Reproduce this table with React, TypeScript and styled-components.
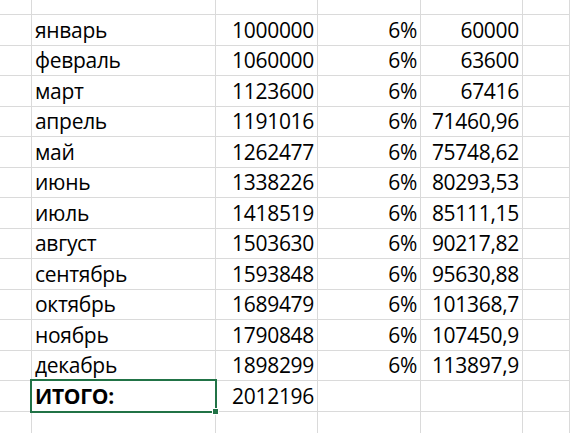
import React from "react";
import styled, { createGlobalStyle } from "styled-components";

const Global = createGlobalStyle`
  html, body { margin: 0; padding: 0; background: #ffffff; }
  body { width: 570px; height: 433px; overflow: hidden; }
`;

const Sheet = styled.div`
  display: grid;
  grid-template-columns: 32px 184px 102px 103px 102px 1fr;
  grid-auto-rows: 30.5px;
  grid-template-rows: 15px;
  width: 570px;
  height: 433px;
  overflow: hidden;
  font-family: "Open Sans", "Liberation Sans", sans-serif;
  font-size: 21px;
  color: #000;
  background: #fff;
`;

const Cell = styled.div<{ $align?: "left" | "right"; $bold?: boolean; $selected?: boolean }>`
  box-sizing: border-box;
  position: relative;
  border-right: 1px solid #dadada;
  border-bottom: 1px solid #dadada;
  display: flex;
  align-items: flex-end;
  justify-content: ${(p) => (p.$align === "right" ? "flex-end" : "flex-start")};
  padding: 0 ${(p) => (p.$align === "right" ? "3px" : "0")} 2px ${(p) => (p.$align === "right" ? "0" : "3px")};
  font-weight: ${(p) => (p.$bold ? 700 : 400)};
  white-space: nowrap;
  line-height: 25px;
  letter-spacing: -0.3px;
  ${(p) =>
    p.$selected &&
    `
    &::after {
      content: "";
      position: absolute;
      left: -2px;
      top: -2px;
      right: -2px;
      bottom: -2px;
      border: 2px solid #217346;
      pointer-events: none;
      z-index: 2;
    }
    &::before {
      content: "";
      position: absolute;
      right: -4px;
      bottom: -4px;
      width: 5px;
      height: 5px;
      background: #217346;
      border: 1px solid #fff;
      z-index: 3;
    }
  `}
`;

type Row = [string, string, string, string];

const rows: Row[] = [
  ["январь", "1000000", "6%", "60000"],
  ["февраль", "1060000", "6%", "63600"],
  ["март", "1123600", "6%", "67416"],
  ["апрель", "1191016", "6%", "71460,96"],
  ["май", "1262477", "6%", "75748,62"],
  ["июнь", "1338226", "6%", "80293,53"],
  ["июль", "1418519", "6%", "85111,15"],
  ["август", "1503630", "6%", "90217,82"],
  ["сентябрь", "1593848", "6%", "95630,88"],
  ["октябрь", "1689479", "6%", "101368,7"],
  ["ноябрь", "1790848", "6%", "107450,9"],
  ["декабрь", "1898299", "6%", "113897,9"],
];

const EmptyRow: React.FC = () => (
  <>
    {Array.from({ length: 6 }).map((_, i) => (
      <Cell key={i} />
    ))}
  </>
);

export default function App() {
  return (
    <>
      <Global />
      <Sheet>
        <EmptyRow />
        {rows.map((r) => (
          <React.Fragment key={r[0]}>
            <Cell />
            <Cell>{r[0]}</Cell>
            <Cell $align="right">{r[1]}</Cell>
            <Cell $align="right">{r[2]}</Cell>
            <Cell $align="right">{r[3]}</Cell>
            <Cell />
          </React.Fragment>
        ))}
        <Cell />
        <Cell $bold $selected>ИТОГО:</Cell>
        <Cell $align="right">2012196</Cell>
        <Cell />
        <Cell />
        <Cell />
        <EmptyRow />
      </Sheet>
    </>
  );
}
